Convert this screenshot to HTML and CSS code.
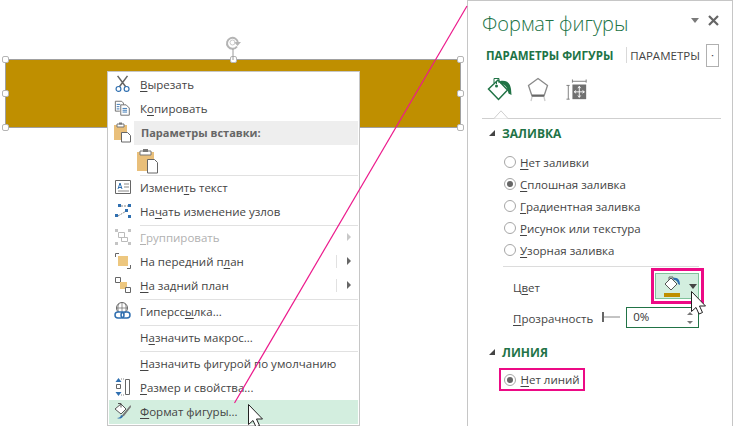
FILE: index.html
```html
<!DOCTYPE html>
<html lang="ru">
<head>
<meta charset="utf-8">
<title>Формат фигуры</title>
<link rel="stylesheet" href="styles.css">
</head>
<body>
<div class="stage">
  <div class="shape">
    <i class="handle h-tl"></i><i class="handle h-tc"></i><i class="handle h-tr"></i>
    <i class="handle h-ml"></i><i class="handle h-mr"></i>
    <i class="handle h-bl"></i><i class="handle h-br"></i>
    <svg class="rotate" width="18" height="26" viewBox="0 0 18 26"><path d="M13 12.500a5.500 5.500 0 1 1 1-3.500" fill="none" stroke="#b4b4b4" stroke-width="2"/><path d="M10 8h7l-3.500 4z" fill="#b4b4b4"/><circle cx="8.500" cy="8.500" r="2.500" fill="none" stroke="#c8c8c8"/><path d="M9 15v11" stroke="#9a9a9a"/></svg>
  </div>

  <div class="menu">
    <div class="item"><span class="ico"><svg width="18" height="18" viewBox="0 0 20 20"><path d="M4 1l9 12M15 1L6 13" stroke="#666" stroke-width="1.700" fill="none"/><circle cx="5" cy="15.500" r="2.700" fill="none" stroke="#2f6fb0" stroke-width="1.300"/><circle cx="14" cy="15.500" r="2.700" fill="none" stroke="#2f6fb0" stroke-width="1.300"/></svg></span><u>В</u>ырезать</div>
    <div class="item"><span class="ico"><svg width="18" height="18" viewBox="0 0 20 20"><path d="M1.500 2.500h7l2 2v2M1.500 2.500v11h5" fill="none" stroke="#666"/><path d="M3 6h4M3 8.500h3M3 11h3" stroke="#2f6fb0"/><path d="M7.500 6.500h6l3.500 3.500v8h-9.500z" fill="#fff" stroke="#666"/><path d="M9.500 10.500h5M9.500 12.500h5M9.500 14.500h5" stroke="#2f6fb0"/></svg></span>К<u>о</u>пировать</div>
    <div class="item"><span class="ico"><svg width="20" height="22" viewBox="0 0 20 22"><path d="M1 4h13v15H1z" fill="#e9bf7a"/><path d="M4 3h7v3H4z" fill="#fff" stroke="#777"/><path d="M6 1.500h3v2H6z" fill="#777"/><path d="M8.500 11.500h6l3 3v6.500h-9z" fill="#fff" stroke="#666"/></svg></span><span class="band">Параметры вставки:</span></div>
    <div class="paste"><svg width="22" height="26" viewBox="0 0 22 26"><path d="M1 4h17v19H1z" fill="#e9bf7a"/><path d="M4 3h11v4H4z" fill="#fff" stroke="#777"/><path d="M7 1h5v3H7z" fill="#777"/><path d="M11.500 11.500h7l3 3v10.500h-10z" fill="#fff" stroke="#666"/></svg></div>
    <div class="sep"></div>
    <div class="item"><span class="ico"><svg width="16" height="14" viewBox="0 0 16 14"><path d="M.500.500h15v13H.500z" fill="#fff" stroke="#666"/><path d="M3 9l2-6 2 6M3.700 7.500h2.600" stroke="#2f6fb0" fill="none"/><path d="M9 4h5M9 7h5M3 11h11" stroke="#888"/></svg></span>Измени<u>т</u>ь текст</div>
    <div class="item"><span class="ico"><svg width="16" height="14" viewBox="0 0 16 14"><path d="M3 2h11M3 12L13 6" stroke="#888" stroke-dasharray="2 1" fill="none"/><path d="M0 10h3v3H0zM13 0h3v3h-3zM3 0h3v3H3zM10 5h3v3h-3zM13 11h3v3h-3z" fill="#2f6fb0"/></svg></span>На<u>ч</u>ать изменение узлов</div>
    <div class="sep"></div>
    <div class="item off"><span class="ico"><svg width="16" height="16" viewBox="0 0 16 16"><path d="M0 0h3v3H0zM13 0h3v3h-3zM0 13h3v3H0zM13 13h3v3h-3z" fill="#c4c4c4"/><path d="M3.500 3.500h6v5h-6zM6.500 8.500h6v4h-6z" fill="none" stroke="#bbb"/></svg></span><u>Г</u>руппировать<span class="more"><i class="tri tri-off"></i></span></div>
    <div class="item"><span class="ico"><svg width="16" height="16" viewBox="0 0 16 16"><path d="M.500 4V.500H4M12 15.500h3.500V12" fill="none" stroke="#666"/><path d="M3 3h10v10H3z" fill="#edc77f"/></svg></span>На передний п<u>л</u>ан<span class="more split"><i class="tri"></i></span></div>
    <div class="item"><span class="ico"><svg width="16" height="16" viewBox="0 0 16 16"><path d="M.500.500h5v5h-5z" fill="#fff" stroke="#666"/><path d="M5 5h7v7H5z" fill="#edc77f"/><path d="M10.500 10.500h5v5h-5z" fill="#fff" stroke="#666"/></svg></span><u>Н</u>а задний план<span class="more split"><i class="tri"></i></span></div>
    <div class="sep"></div>
    <div class="item"><span class="ico"><svg width="18" height="18" viewBox="0 0 18 18"><circle cx="8" cy="6" r="5.500" fill="none" stroke="#666"/><path d="M2.500 6h11M8 .500v11M5 1.500c-1.500 3-1.500 6 0 9M11 1.500c1.500 3 1.500 6 0 9" fill="none" stroke="#666" stroke-width=".7"/><rect x="1" y="10" width="9" height="6" rx="3" fill="#fff" stroke="#2f6fb0" stroke-width="1.500"/><rect x="7" y="10" width="9" height="6" rx="3" fill="none" stroke="#2f6fb0" stroke-width="1.500"/></svg></span>Гиперсс<u>ы</u>лка...</div>
    <div class="sep"></div>
    <div class="item"><span class="ico"></span>Н<u>а</u>значить макрос...</div>
    <div class="sep"></div>
    <div class="item"><span class="ico"></span><u>Н</u>азначить фигурой по умолчанию</div>
    <div class="item"><span class="ico"><svg width="16" height="18" viewBox="0 0 16 18"><path d="M3.500 0L6.500 4h-6zM3.500 18L6.500 14h-6z" fill="#2f6fb0"/><path d="M1.500 6.500h4v4h-4z" fill="none" stroke="#666"/><path d="M6 1h4M6 17h4" stroke="#888" stroke-dasharray="1 1"/><path d="M10.500 1.500h4v15h-4z" fill="none" stroke="#666"/></svg></span><u>Р</u>азмер и свойства...</div>
    <div class="item active"><span class="ico"><svg width="18" height="18" viewBox="0 0 18 18"><path d="M1 7l6-5 5 5-5 5z" fill="#fff" stroke="#555"/><path d="M4 1.500h3v4" fill="none" stroke="#555"/><path d="M16.500 3L9 12l-2 3 3-1 7-9z" fill="#777"/><path d="M3 16c2 0 4-1 4-3l2 1c-1 3-4 3-6 2z" fill="#2f6fb0"/></svg></span><u>Ф</u>ормат фигуры...</div>
  </div>

  <div class="panel">
    <div class="head">
      <h1 class="title">Формат фигуры</h1>
      <i class="tri-down head-tri"></i>
      <svg class="close" width="11" height="11" viewBox="0 0 11 11"><path d="M1 1l9 9M10 1l-9 9" stroke="#666" stroke-width="2.200"/></svg>
    </div>
    <div class="tabs">
      <span class="tab-on">ПАРАМЕТРЫ ФИГУРЫ</span>
      <span class="tab-sep"></span>
      <span class="tab-off">ПАРАМЕТРЫ Т</span>
      <span class="tab-more">·</span>
    </div>
    <div class="icons">
      <svg class="i-fill" width="26" height="26" viewBox="0 0 26 26"><path d="M1.500 12L11 3l9.500 10-9 9.500z" fill="#fff" stroke="#217346" stroke-width="1.500"/><path d="M7 6V1.500h5V6" fill="none" stroke="#217346"/><circle cx="9.500" cy="9" r="1.500" fill="#217346"/><path d="M9 7h1v-3H9z" fill="#217346"/><path d="M13 4c6-1 10 1 11 8l.500 6-3-1.500-1-4c-1-3-3-5-7-6z" fill="#217346"/></svg>
      <svg class="i-pent" width="22" height="26" viewBox="0 0 22 26"><path d="M11 1.500l9.500 7-3.500 10.500H5L1.500 8.500z" fill="#fff" stroke="#8a8a8a" stroke-width="1.300"/><path d="M5 18.500h12" stroke="#666" stroke-width="2"/><path d="M5 20l-1 4M17 20l1 4" stroke="#ccc" stroke-width="1.300"/></svg>
      <svg class="i-size" width="22" height="22" viewBox="0 0 24 24"><path d="M7 .5V4M22 .5V4M7 2.500h15" fill="none" stroke="#777"/><path d="M.5 7H4M.5 22H4M2.500 7v15" fill="none" stroke="#777"/><path d="M7 6h15v16H7z" fill="#707070"/><path d="M14.500 8v12M9 14h11M13 10l1.500-2 1.500 2M13 18l1.500 2 1.500-2M11 12.500L9 14l2 1.500M18 12.500l2 1.500-2 1.500" fill="none" stroke="#fff"/></svg>
    </div>
    <div class="rule"><svg class="caret" width="16" height="9" viewBox="0 0 16 9"><path d="M0 8.500h1L8 .8l7 7.700h1" fill="#fff" stroke="#cfcfcf"/></svg></div>

    <div class="sec sec-fill"><i class="expand"></i>ЗАЛИВКА</div>
    <div class="opts">
      <div class="opt"><i class="radio"></i><span><u>Н</u>ет заливки</span></div>
      <div class="opt"><i class="radio on"></i><span><u>С</u>плошная заливка</span></div>
      <div class="opt"><i class="radio"></i><span><u>Г</u>радиентная заливка</span></div>
      <div class="opt"><i class="radio"></i><span><u>Р</u>исунок или текстура</span></div>
      <div class="opt"><i class="radio"></i><span><u>У</u>зорная заливка</span></div>
    </div>
    <div class="line"></div>
    <div class="field field-color">
      <span class="lbl">Ц<u>в</u>ет</span>
      <span class="mark">
        <span class="colorbtn">
          <svg width="18" height="22" viewBox="0 0 18 22"><path d="M1 8l6-6 6 6-6 6z" fill="#fff" stroke="#555"/><path d="M5 4V1h4v3" fill="none" stroke="#666"/><path d="M9 2c5-1 7 2 7 7l-2-1c0-2-2-4-4-4z" fill="#2f6fb0"/><path d="M0 17h16v4H0z" fill="#bf8f00"/></svg>
          <i class="tri-down dark"></i>
        </span>
      </span>
    </div>
    <div class="field field-alpha">
      <span class="lbl"><u>П</u>розрачность</span>
      <svg class="slider" width="18" height="10" viewBox="0 0 18 10"><path d="M1 5h17" stroke="#888"/><path d="M0 0h2v10H0z" fill="#666"/></svg>
      <span class="spin">0%<i class="sp up"></i><i class="sp down"></i></span>
    </div>
    <div class="sec sec-line"><i class="expand"></i>ЛИНИЯ</div>
    <div class="opt-mark"><i class="radio on"></i><span><u>Н</u>ет линий</span></div>
  </div>

  <svg class="overlay" width="733" height="426" viewBox="0 0 733 426">
    <path d="M467 6L234.500 403" stroke="#ec1a8c" stroke-width="1.200" fill="none"/>
    <path d="M248.500 404.500v20l4.500-4 3 6.500 3.500-1.500-3-6.500h6z" fill="#fff" stroke="#222"/>
    <path d="M691.500 291.500v20l4.500-4 3 6.500 3.500-1.500-3-6.500h6z" fill="#fff" stroke="#222"/>
  </svg>
</div>
</body>
</html>
```

FILE: styles.css
```css
* { box-sizing: border-box; }
html, body { margin: 0; padding: 0; background: #fff; }
body { font-family: "Open Sans", "Noto Sans", sans-serif; font-size: 11.500px; color: #444; }
u { text-decoration: underline; text-underline-offset: 2px; text-decoration-thickness: 1px; }
i { display: block; font-style: normal; }

.stage { position: relative; width: 733px; height: 426px; overflow: hidden; display: flex; justify-content: flex-end; }

/* Shape on the free canvas */
.shape { position: absolute; left: 5px; top: 59px; width: 456px; height: 69px; background: #bf8f00; border: 1px solid #a0a0a0; }
.handle { position: absolute; width: 7px; height: 7px; background: #fff; border: 1.500px solid #b5b5b5; border-radius: 2px; }
.h-tl { left: -4px; top: -4px; }
.h-tc { left: 224px; top: -4px; }
.h-tr { right: -4px; top: -4px; }
.h-ml { left: -4px; top: 30px; }
.h-mr { right: -4px; top: 30px; }
.h-bl { left: -4px; bottom: -4px; }
.h-br { right: -4px; bottom: -4px; }
.rotate { position: absolute; left: 218px; top: -26px; }

/* Context menu */
.menu { position: absolute; left: 107px; top: 71px; width: 253px; height: 355px; background: #fff; border: 1px solid #c6c6c6; padding: 1px; }
.item { display: flex; align-items: center; height: 24px; padding-bottom: 2px; }
.ico { flex: 0 0 31px; display: flex; justify-content: center; align-items: center; padding-right: 3px; height: 100%; }
.band { flex: 1; align-self: stretch; margin: 0 0 -2px -6px; padding: 0 0 2px 7px; background: #eeeeee; font-size: 11px; font-weight: 700; color: #666; display: flex; align-items: center; }
.paste { height: 29px; padding: 3px 0 0 32px; }
.paste svg { display: block; margin-left: -5px; }
.sep { height: 1px; margin: 1px 0 0 31px; background: #e1e1e1; }
.off { color: #b1b1b1; }
.more { margin-left: auto; width: 22px; height: 13px; display: flex; align-items: center; justify-content: flex-end; padding-right: 7px; }
.split { border-left: 1px solid #e1e1e1; }
.tri { width: 0; height: 0; border-left: 4px solid #666; border-top: 4px solid transparent; border-bottom: 4px solid transparent; }
.tri-off { border-left-color: #c8c8c8; }
.active { background: #d3eedf; }

/* Side panel */
.panel { width: 266px; min-width: 0; height: 426px; border: 1px solid #c6c6c6; border-bottom: 0; padding: 0 13px 0 14px; }
.head { display: flex; align-items: center; height: 43px; padding-top: 3px; }
.title { margin: 0; font-size: 20px; font-weight: 300; color: #217346; line-height: 1; }
.tri-down { width: 0; height: 0; border-left: 4.500px solid transparent; border-right: 4.500px solid transparent; border-top: 5px solid #7a7a7a; margin-left: auto; }
.head-tri { margin-bottom: 7px; }
.close { margin: 0 0 7px 9px; }
.tabs { display: flex; align-items: center; height: 22px; padding-left: 4px; white-space: nowrap; }
.tab-on { font-weight: 700; font-size: 11.500px; color: #217346; }
.tab-sep { width: 1px; height: 16px; background: #d9d9d9; margin: 0 3px 0 13px; }
.tab-off { flex: 1; min-width: 0; overflow: hidden; color: #444; font-size: 11.500px; }
.tab-more { flex: 0 0 13px; height: 23px; border: 1px solid #b0b0b0; text-align: center; margin-left: 4px; line-height: 20px; }
.icons { display: flex; align-items: center; height: 37px; margin-top: 5px; padding-left: 5px; }
.i-pent { margin-left: 14px; }
.i-size { margin-left: 17px; }
.rule { position: relative; height: 1px; margin-top: 10px; background: #cfcfcf; width: 239px; }
.caret { position: absolute; left: 11px; top: -8px; display: block; }
.sec { display: flex; align-items: center; height: 18px; font-weight: 700; font-size: 12px; color: #217346; }
.expand { width: 0; height: 0; border-left: 6px solid transparent; border-bottom: 6px solid #444; margin: 0 7px 0 7px; }
.sec-fill { margin-top: 5px; }
.opts { margin-top: 9px; padding-left: 22px; }
.opt { display: flex; align-items: center; height: 22px; }
.radio { flex: 0 0 12px; width: 12px; height: 12px; border: 1px solid #a6a6a6; border-radius: 50%; margin-right: 5px; background: #fff; position: relative; }
.opts .radio { margin-right: 4px; }
.radio.on::after { content: ""; position: absolute; left: 2px; top: 2px; width: 6px; height: 6px; border-radius: 50%; background: #666; }
.line { height: 1px; width: 196px; margin: 5px 0 0 21px; background: #dcdcdc; }
.field { display: flex; align-items: center; position: relative; }
.lbl { padding: 2px 0 0 31px; }
.field-color { height: 38px; margin-top: 1px; align-items: flex-start; }
.field-color .lbl { padding-top: 12px; }
.mark { margin-left: auto; margin-right: 15px; width: 53px; height: 36px; border: 3.500px solid #ec0a85; padding: 2px 0 0 1px; }
.colorbtn { display: flex; align-items: center; gap: 7px; width: 44px; height: 26px; background: #d3eedf; border: 1px solid #7fc29b; padding: 1px 0 0 8px; }
.tri-down.dark { border-top-color: #444; margin: 0; }
.field-alpha { height: 22px; }
.slider { margin-left: 9px; }
.spin { position: relative; margin-left: 6px; width: 73px; height: 21px; border: 1px solid #217346; padding-left: 6px; line-height: 18px; color: #333; }
.sp { position: absolute; right: 5px; width: 0; height: 0; border-left: 3px solid transparent; border-right: 3px solid transparent; }
.sp.up { top: 4px; border-bottom: 3px solid #777; }
.sp.down { bottom: 3px; border-top: 3px solid #777; }
.sec-line { margin-top: 15px; }
.opt-mark { display: inline-flex; align-items: center; height: 23px; margin: 7px 0 0 17px; padding: 0 3px 0 2.500px; border: 2.500px solid #ec0a85; white-space: nowrap; }

.overlay { position: absolute; left: 0; top: 0; pointer-events: none; }
```
